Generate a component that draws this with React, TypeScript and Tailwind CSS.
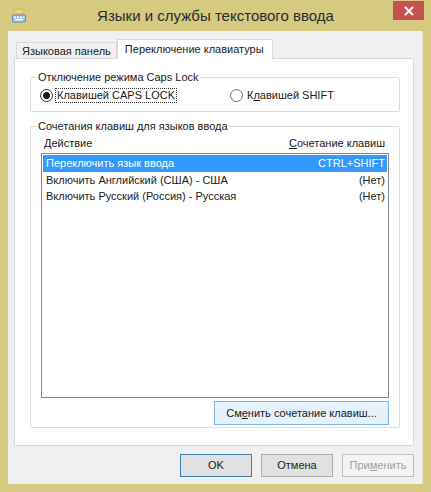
import React from 'react';

// Dialog: "Языки и службы текстового ввода" (Windows 8 style)

const FONT = { fontFamily: '"Liberation Sans", Arial, sans-serif' };

function LangBarIcon() {
  return (
    <svg width="16" height="16" viewBox="0 0 16 16" className="shrink-0">
      <ellipse cx="8" cy="3.5" rx="5" ry="2.5" fill="#f2d37a" stroke="#c9a544" strokeWidth="0.8" />
      <rect x="1.5" y="7" width="13" height="7" rx="1" fill="#9fc3ec" stroke="#4c7fc0" strokeWidth="0.8" />
      <rect x="3" y="8.5" width="2" height="1.5" fill="#fff" />
      <rect x="6" y="8.5" width="2" height="1.5" fill="#fff" />
      <rect x="9" y="8.5" width="2" height="1.5" fill="#fff" />
      <rect x="12" y="8.5" width="1.5" height="1.5" fill="#fff" />
      <rect x="4" y="11" width="8" height="1.5" fill="#fff" />
    </svg>
  );
}

function Radio({ checked, children, focused }: { checked?: boolean; children: React.ReactNode; focused?: boolean }) {
  return (
    <label className="flex items-center gap-[3px]">
      <span
        className={`w-[13px] h-[13px] rounded-full border flex items-center justify-center bg-white ${
          checked ? 'border-[#333]' : 'border-[#707070]'
        }`}
      >
        {checked && <span className="w-[7px] h-[7px] rounded-full bg-[#1a1a1a]" />}
      </span>
      <span className={`px-[1px] leading-[13px] ${focused ? 'outline outline-1 outline-dotted outline-[#333]' : ''}`}>
        {children}
      </span>
    </label>
  );
}

function Group({ title, className, children }: { title: string; className?: string; children: React.ReactNode }) {
  return (
    <fieldset className={`border border-[#dcdcdc] rounded-[2px] ${className ?? ''}`}>
      <legend className="ml-[6px] px-[1px] leading-[13px]">{title}</legend>
      {children}
    </fieldset>
  );
}

function DlgButton({
  children,
  variant = 'normal',
  className,
}: {
  children: React.ReactNode;
  variant?: 'normal' | 'default' | 'disabled' | 'hover';
  className?: string;
}) {
  const styles = {
    normal: 'border-[#adadad] bg-[#e1e1e1] text-[#1a1a1a]',
    default: 'border-[#3c7fb1] bg-[#e1e1e1] text-[#1a1a1a]',
    disabled: 'border-[#bfbfbf] bg-[#f4f4f4] text-[#a0a0a0]',
    hover: 'border-[#7eb4ea] bg-[#e5f1fb] text-[#1a1a1a]',
  }[variant];
  return (
    <button className={`h-[23px] border flex items-center justify-center ${styles} ${className ?? ''}`}>{children}</button>
  );
}

const ROWS = [
  { action: 'Переключить язык ввода', keys: 'CTRL+SHIFT', selected: true },
  { action: 'Включить Английский (США) - США', keys: '(Нет)' },
  { action: 'Включить Русский (Россия) - Русская', keys: '(Нет)' },
];

export default function App() {
  return (
    <div className="w-[431px] h-[492px] bg-[#d5ca80] flex flex-col text-[11px] text-[#1a1a1a]" style={FONT}>
      {/* title bar */}
      <div className="relative h-[31px] flex items-center shrink-0">
        <div className="pl-[11px] pt-[1px]">
          <LangBarIcon />
        </div>
        <div className="absolute left-0 right-0 top-[6px] text-center text-[15px] text-[#2b2b2b] leading-[20px]">
          Языки и службы текстового ввода
        </div>
        <div className="absolute top-[1px] right-[7px] w-[31px] h-[19px] bg-[#c75050] flex items-center justify-center">
          <svg width="10" height="10" viewBox="0 0 10 10">
            <path d="M1 1 L9 9 M9 1 L1 9" stroke="#fff" strokeWidth="1.8" />
          </svg>
        </div>
      </div>

      {/* client area */}
      <div className="flex-1 mx-[8px] mb-[8px] bg-[#f0f0f0] border-r border-[#e8e4c4] pl-[6px] pr-[7px] pt-[7px] flex flex-col">
        {/* tabs */}
        <div className="flex items-end h-[20px] pl-[2px]">
          <div className="h-[16px] px-[5px] border border-b-0 border-[#d9d9d9] bg-[#f0f0f0] leading-[16px] mb-0">
            Языковая панель
          </div>
          <div className="h-[20px] px-[7px] pr-[8px] border border-b-0 border-[#d9d9d9] bg-white leading-[18px] -mb-px relative z-10">
            Переключение клавиатуры
          </div>
        </div>

        {/* tab panel */}
        <div className="h-[388px] w-[400px] border border-[#d9d9d9] bg-white flex flex-col pl-[15px] pr-[13px] pt-[12px]">
          <Group title="Отключение режима Caps Lock" className="h-[41px] w-[370px]">
            <div className="flex items-center pl-[9px] pt-[5px]">
              <div className="w-[190px]">
                <Radio checked focused>
                  Клавишей CAPS LOCK
                </Radio>
              </div>
              <Radio>
                К<u>л</u>авишей SHIFT
              </Radio>
            </div>
          </Group>

          <Group title="Сочетания клавиш для языков ввода" className="mt-[8px] h-[308px] w-[370px]">
            <div className="flex flex-col pl-[10px] pr-[10px]">
              <div className="flex justify-between h-[20px] items-center pl-[3px] pr-[4px] pt-[1px]">
                <span>Действие</span>
                <span>
                  <u>С</u>очетание клавиш
                </span>
              </div>
              <div className="h-[245px] border border-[#828790] bg-white flex flex-col pt-[1px] px-[1px]">
                {ROWS.map((r) => (
                  <div
                    key={r.action}
                    className={`h-[16.5px] flex justify-between items-center pl-[3px] pr-[2px] ${
                      r.selected ? 'bg-[#3399ff] text-white' : ''
                    }`}
                  >
                    <span>{r.action}</span>
                    <span>{r.keys}</span>
                  </div>
                ))}
              </div>
              <div className="flex justify-end pt-[3px]">
                <DlgButton variant="hover" className="w-[175px] h-[24px]">
                  См<u>е</u>нить сочетание клавиш...
                </DlgButton>
              </div>
            </div>
          </Group>
        </div>

        {/* bottom buttons */}
        <div className="flex justify-end gap-[9px] pt-[8px] pr-[1px]">
          <DlgButton variant="default" className="w-[72px]">
            OK
          </DlgButton>
          <DlgButton className="w-[72px]">Отмена</DlgButton>
          <DlgButton variant="disabled" className="w-[72px]">
            При<u>м</u>енить
          </DlgButton>
        </div>
      </div>
    </div>
  );
}
